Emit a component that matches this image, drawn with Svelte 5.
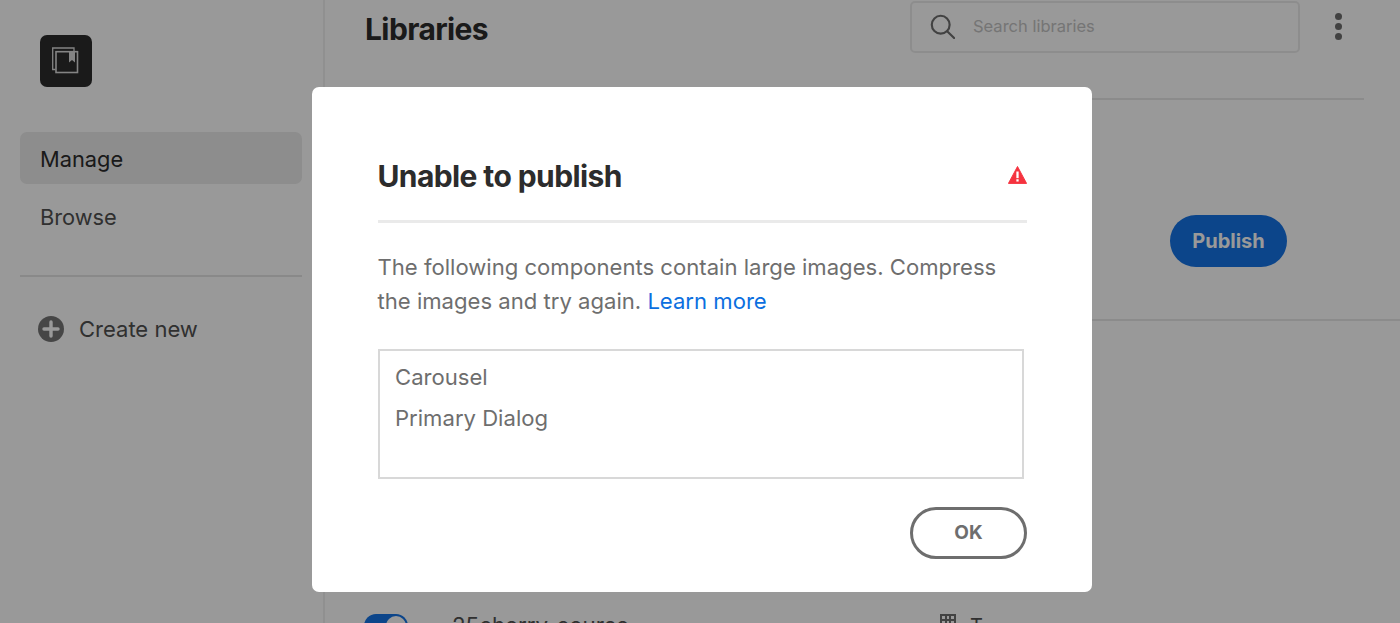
<script>
  // Libraries manager page sitting behind the "Unable to publish" dialog.
  const blockedComponents = ['Carousel', 'Primary Dialog'];
  const navItems = [
    { label: 'Manage', active: true },
    { label: 'Browse', active: false },
  ];
</script>

<div class="page">
  <aside class="sidebar">
    <div class="logo">
      <svg width="28" height="28" viewBox="0 0 28 28" fill="none" stroke="#dcdcdc" stroke-width="1.3">
        <path d="M3.5 22.5 H0.7 V1 H22 V4.7" />
        <rect x="4" y="4.7" width="21.5" height="20.8" stroke-width="1.6" />
        <path d="M17 4.7 H23 V15.5 L20 13 L17 15.5 Z" fill="#dcdcdc" stroke="none" />
      </svg>
    </div>
    <nav class="nav">
      {#each navItems as item}
        <a class="nav-item" class:active={item.active} href="#top">{item.label}</a>
      {/each}
    </nav>
    <hr class="side-rule" />
    <div class="create">
      <svg width="26" height="26" viewBox="0 0 26 26">
        <circle cx="13" cy="13" r="13" fill="#767676" />
        <path d="M13 6 V20 M6 13 H20" stroke="#fff" stroke-width="3.4" stroke-linecap="round" />
      </svg>
      <span>Create new</span>
    </div>
  </aside>

  <main class="main">
    <header class="top">
      <h1>Libraries</h1>
      <div class="search">
        <svg width="25" height="25" viewBox="0 0 28 28" fill="none" stroke="#6e6e6e" stroke-width="2.4">
          <circle cx="12" cy="12" r="10" />
          <path d="M19.5 19.5 L27 27" stroke-linecap="round" />
        </svg>
        <span>Search libraries</span>
      </div>
      <div class="kebab"><i></i><i></i><i></i></div>
    </header>
    <div class="rule"></div>
    <section class="publish-row">
      <button class="publish">Publish</button>
    </section>
    <div class="rule wide"></div>
    <section class="lib-row">
      <span class="toggle"><i></i></span>
      <span class="lib-name">25cherry_course</span>
      <span class="lib-kind">
        <svg width="16" height="16" viewBox="0 0 16 16" fill="#6e6e6e">
          <path d="M0 0 H16 V16 H0 Z M2 2 V5 H5 V2 Z M7 2 V5 H9 V2 Z M11 2 V5 H14 V2 Z M2 7 V9 H5 V7 Z M7 7 V9 H9 V7 Z M11 7 V9 H14 V7 Z" fill-rule="evenodd" />
        </svg>
        <span>T</span>
      </span>
    </section>
  </main>

  <div class="scrim">
    <div class="dialog" role="alertdialog" aria-labelledby="dlg-title">
      <div class="dialog-head">
        <h2 id="dlg-title">Unable to publish</h2>
        <svg class="alert" width="19" height="18" viewBox="0 0 20 19">
          <path d="M10 0.5 L19.6 18.4 H0.4 Z" fill="#f5333f" stroke="#f5333f" stroke-linejoin="round" />
          <rect x="8.8" y="5.8" width="2.4" height="7" fill="#fff" />
          <rect x="8.8" y="14" width="2.4" height="2.4" fill="#fff" />
        </svg>
      </div>
      <p class="dialog-body">
        The following components contain large images. Compress the images and try again.
        <a href="#top">Learn more</a>
      </p>
      <ul class="list">
        {#each blockedComponents as name}
          <li>{name}</li>
        {/each}
      </ul>
      <div class="dialog-foot">
        <button class="ok">OK</button>
      </div>
    </div>
  </div>
</div>

<style>
  :global(body) {
    margin: 0;
    background: #fff;
    font-family: Inter, "Liberation Sans", sans-serif;
  }
  .page {
    position: relative;
    display: flex;
    width: 1400px;
    height: 623px;
    overflow: hidden;
    background: #fff;
  }

  .sidebar {
    flex: 0 0 325px;
    box-sizing: border-box;
    padding: 34.5px 21px 0 20px;
    border-right: 2px solid #f0f0f0;
  }
  .logo {
    display: flex;
    align-items: center;
    justify-content: center;
    width: 52px;
    height: 52px;
    margin-left: 19.5px;
    background: #2c2c2c;
    border-radius: 7px;
  }
  .nav {
    display: flex;
    flex-direction: column;
    gap: 6px;
    margin-top: 45.5px;
  }
  .nav-item {
    display: block;
    height: 52px;
    padding-left: 20px;
    font-size: 21.8px;
    line-height: 54px;
    color: #505050;
    text-decoration: none;
    border-radius: 7px;
  }
  .nav-item.active {
    background: #ebebeb;
    color: #2c2c2c;
  }
  .side-rule {
    height: 2px;
    margin: 33px 0 0;
    border: 0;
    background: #e4e4e4;
  }
  .create {
    display: flex;
    align-items: center;
    gap: 15px;
    margin: 39px 0 0 18px;
    font-size: 22px;
    color: #505050;
  }

  .main {
    flex: 1;
    min-width: 0;
  }
  .top {
    display: flex;
    align-items: center;
    height: 53px;
    padding: 0 57px 0 40px;
  }
  .top h1 {
    flex: 1;
    margin: 4px 0 0;
    font-size: 30px;
    font-weight: 700;
    letter-spacing: -0.6px;
    color: #2c2c2c;
  }
  .search {
    display: flex;
    align-items: center;
    gap: 18px;
    box-sizing: border-box;
    width: 390px;
    height: 52px;
    padding: 0 18px;
    border: 2px solid #ececec;
    border-radius: 5px;
    font-size: 16.5px;
    color: #c4c4c4;
  }
  .search span {
    margin-top: -2px;
  }
  .kebab {
    display: flex;
    flex-direction: column;
    gap: 3px;
    margin-left: 35px;
    width: 8px;
  }
  .kebab i {
    width: 7px;
    height: 7px;
    border-radius: 50%;
    background: #6e6e6e;
  }
  .rule {
    height: 2px;
    margin: 45px 36px 0 0;
    background: #e8e8e8;
  }
  .rule.wide {
    margin: 0;
  }
  .publish-row {
    display: flex;
    align-items: center;
    justify-content: flex-end;
    height: 219px;
    padding-right: 113px;
    box-sizing: border-box;
  }
  .publish {
    width: 117px;
    height: 52px;
    border: 0;
    border-radius: 26px;
    background: #1473e6;
    color: #fff;
    font: 700 20px Inter, sans-serif;
    margin-top: 63px;
  }
  .lib-row {
    display: flex;
    align-items: flex-start;
    margin-top: 293px;
    padding-left: 39px;
  }
  .toggle {
    position: relative;
    width: 44px;
    height: 24px;
    border-radius: 12px;
    background: #1473e6;
  }
  .toggle i {
    position: absolute;
    right: 2px;
    top: 2px;
    width: 20px;
    height: 20px;
    border-radius: 50%;
    background: #fff;
  }
  .lib-name {
    margin: -2px 0 0 44px;
    width: 488px;
    font-size: 22.3px;
    color: #505050;
  }
  .lib-kind {
    display: flex;
    gap: 14px;
    font-size: 20px;
    color: #505050;
  }

  .scrim {
    position: absolute;
    inset: 0;
    display: flex;
    align-items: flex-start;
    padding: 86.5px 0 0 312px;
    background: rgba(0, 0, 0, 0.4);
  }
  .dialog {
    box-sizing: border-box;
    width: 780px;
    height: 505px;
    padding: 65.5px 65px 0 65.5px;
    background: #fff;
    border-radius: 7px;
  }
  .dialog-head {
    display: flex;
    justify-content: space-between;
    align-items: center;
    height: 68px;
    border-bottom: 3px solid #eaeaea;
  }
  .dialog-head h2 {
    margin: 0 0 20px;
    font-size: 30px;
    font-weight: 700;
    letter-spacing: -0.6px;
    color: #2c2c2c;
  }
  .alert {
    margin-bottom: 23px;
  }
  .dialog-body {
    margin: 27px 0 0;
    font-size: 22.1px;
    line-height: 34px;
    color: #6e6e6e;
  }
  .dialog-body a {
    color: #0b6fe0;
    text-decoration: none;
  }
  .list {
    box-sizing: border-box;
    width: 646px;
    height: 130px;
    margin: 31px 0 0;
    padding: 6px 15.5px;
    list-style: none;
    border: 2px solid #d8d8d8;
    font-size: 22.1px;
    line-height: 41px;
    color: #6e6e6e;
  }
  .dialog-foot {
    display: flex;
    justify-content: flex-end;
    margin-top: 28px;
  }
  .ok {
    width: 117px;
    height: 52px;
    padding: 0 0 2px;
    background: #fff;
    border: 3px solid #6e6e6e;
    border-radius: 26px;
    color: #6e6e6e;
    font: 700 19px Inter, sans-serif;
  }
</style>
